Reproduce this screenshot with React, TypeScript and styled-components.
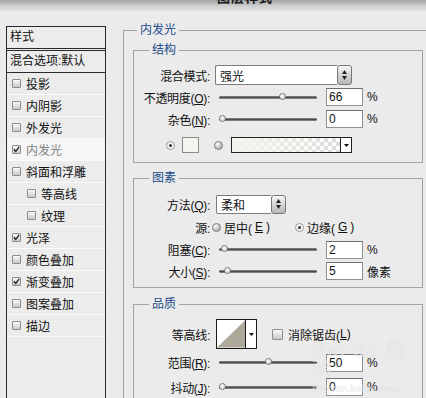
import React from 'react';
import styled, { createGlobalStyle } from 'styled-components';

const GlobalStyle = createGlobalStyle`
  html, body { margin: 0; padding: 0; }
  body {
    background: #ebebeb;
    font-family: "Liberation Sans", "Noto Sans CJK SC", sans-serif;
    font-size: 12px;
    color: #111;
  }
`;

const Dialog = styled.div`
  position: relative;
  width: 426px;
  height: 398px;
  overflow: hidden;
  background: #ebebeb;
`;

const TitleBar = styled.div`
  height: 11px;
  overflow: hidden;
  padding-left: 217px;
  background: linear-gradient(#a4a4a4, #cfcfcf 55%, #e0e0e0);
`;

const TitleText = styled.div`
  font-weight: bold;
  font-size: 13px;
  line-height: 14px;
  margin-top: -9px;
  letter-spacing: 1px;
  color: #1a1a1a;
`;

const Body = styled.div`
  display: flex;
  padding-left: 6px;
  gap: 17px;
`;

/* ---------- left style list ---------- */

const StyleList = styled.div`
  flex: none;
  width: 98px;
  height: 400px;
  margin-top: 15px;
  border: 1px solid #2a2a2a;
  background: #ececec;
`;

const ListHeader = styled.div`
  height: 21px;
  line-height: 21px;
  padding-left: 3px;
  border-bottom: 3px double #2a2a2a;
`;

const BlendRow = styled.div`
  height: 21px;
  line-height: 21px;
  padding-left: 3px;
  border-bottom: 1px solid #2a2a2a;
`;

const ListItem = styled.div<{ $sub?: boolean; $active?: boolean }>`
  display: flex;
  align-items: center;
  height: 21px;
  padding-left: ${p => (p.$sub ? 20 : 5)}px;
  border-bottom: 1px solid #fbfbfb;
  background: ${p => (p.$active ? '#f6f6f6' : '#ececec')};
  color: ${p => (p.$active ? '#808080' : '#111')};
`;

const CheckBox = styled.span<{ $size?: number }>`
  flex: none;
  display: inline-flex;
  align-items: center;
  justify-content: center;
  width: ${p => p.$size ?? 9}px;
  height: ${p => p.$size ?? 9}px;
  margin-right: 5px;
  box-sizing: border-box;
  border: 1px solid #8c8c8c;
  border-radius: 1px;
  background: linear-gradient(#fafafa, #c9c9c9);
`;

const Check = () => (
  <svg width="9" height="9" viewBox="0 0 9 9">
    <path d="M1.2 4.2 L3.5 7 L8 1" fill="none" stroke="#1c1c1c" strokeWidth="1.7" />
  </svg>
);

/* ---------- right panel ---------- */

const OuterGroup = styled.fieldset`
  flex: none;
  width: 320px;
  min-width: 0;
  margin: 12px 0 0 0;
  padding: 0 0 0 9px;
  border: 1px solid #a3a3a3;
  border-right: none;
  border-bottom: none;
`;

const Legend = styled.legend<{ $offset: number }>`
  margin-left: ${p => p.$offset}px;
  padding: 0 3px;
  line-height: 14px;
  color: #244d8a;
`;

const Group = styled.fieldset<{ $top: number; $padTop: number; $padBottom: number }>`
  box-sizing: border-box;
  width: 290px;
  min-width: 0;
  margin: ${p => p.$top}px 0 0 0;
  padding: ${p => p.$padTop}px 0 ${p => p.$padBottom}px 0;
  border: 1px solid #a3a3a3;
`;

const Row = styled.div<{ $h: number; $pad?: number }>`
  display: flex;
  align-items: center;
  height: ${p => p.$h}px;
  padding-left: ${p => p.$pad ?? 0}px;
`;

const Label = styled.span`
  flex: none;
  width: 76px;
  text-align: right;
  white-space: nowrap;
  letter-spacing: -0.3px;
`;

const SelectBox = styled.div<{ $w: number; $h: number; $ml: number }>`
  display: flex;
  width: ${p => p.$w}px;
  height: ${p => p.$h}px;
  margin-left: ${p => p.$ml}px;
`;

const SelectField = styled.div`
  flex: 1;
  display: flex;
  align-items: center;
  padding-left: 4px;
  background: #fff;
  border: 1px solid #7c7c7c;
  border-right: none;
  border-radius: 2px 0 0 2px;
`;

const Stepper = styled.div`
  flex: none;
  width: 15px;
  display: flex;
  align-items: center;
  justify-content: center;
  box-sizing: border-box;
  border: 1px solid #777;
  border-radius: 3px;
  background: linear-gradient(#f6f6f6, #d4d4d4 50%, #b9b9b9);
`;

const StepArrows = () => (
  <svg width="5" height="10" viewBox="0 0 5 10">
    <path d="M2.5 0 L5 4 L0 4 Z M2.5 10 L5 6 L0 6 Z" fill="#222" />
  </svg>
);

const Track = styled.div`
  position: relative;
  flex: none;
  width: 98px;
  height: 3px;
  margin-left: 9px;
  border-radius: 2px;
  background: linear-gradient(#8a8a8a, #4e4e4e 50%, #9a9a9a);
`;

const Thumb = styled.span`
  position: absolute;
  top: -3px;
  width: 7px;
  height: 7px;
  box-sizing: border-box;
  border-radius: 50%;
  border: 1px solid #7a7a7a;
  background: radial-gradient(circle at 40% 35%, #ffffff, #d8d8d8 70%);
`;

const ValueInput = styled.div`
  flex: none;
  width: 37px;
  height: 18px;
  margin-left: 9px;
  box-sizing: border-box;
  padding-left: 2px;
  line-height: 16px;
  background: #fff;
  border: 1px solid #8f8f8f;
  border-top-color: #6e6e6e;
`;

const Unit = styled.span`
  margin-left: 4px;
`;

const Radio = styled.span<{ $on?: boolean }>`
  flex: none;
  display: inline-flex;
  align-items: center;
  justify-content: center;
  width: 9px;
  height: 9px;
  box-sizing: border-box;
  border-radius: 50%;
  border: 1px solid ${p => (p.$on ? '#9a9a9a' : '#7d7d7d')};
  background: ${p =>
    p.$on
      ? '#f2f2f2'
      : 'radial-gradient(circle at 35% 30%, #ffffff, #c4c4c4 55%, #8e8e8e)'};
  &::after {
    content: '';
    display: ${p => (p.$on ? 'block' : 'none')};
    width: 3px;
    height: 3px;
    border-radius: 50%;
    background: #333;
  }
`;

const RadioOption = styled.label<{ $w?: number; $ml?: number }>`
  display: flex;
  align-items: center;
  gap: 3px;
  width: ${p => (p.$w ? `${p.$w}px` : 'auto')};
  margin-left: ${p => p.$ml ?? 0}px;
`;

const Swatch = styled.span`
  flex: none;
  width: 17px;
  height: 16px;
  margin-left: 7px;
  box-sizing: border-box;
  border: 1px solid #8a8a8a;
  background: #f4f4ee;
`;

const GradientPicker = styled.div`
  flex: none;
  display: flex;
  width: 121px;
  height: 16px;
  margin-left: 8px;
  box-sizing: border-box;
  border: 1px solid #222;
`;

const GradientFill = styled.div`
  flex: 1;
  background:
    linear-gradient(to right, #f4f4ee 0%, rgba(244, 244, 238, 0.2) 100%),
    repeating-conic-gradient(#d6d6d6 0 25%, #ffffff 0 50%) 0 0 / 8px 8px;
`;

const DropPart = styled.div`
  flex: none;
  width: 10px;
  display: flex;
  align-items: center;
  justify-content: center;
  border-left: 1px solid #222;
  background: #fff;
`;

const DownArrow = () => (
  <svg width="5" height="3" viewBox="0 0 5 3">
    <path d="M0 0 L5 0 L2.5 3 Z" fill="#111" />
  </svg>
);

const ContourPicker = styled.div`
  flex: none;
  display: flex;
  width: 41px;
  height: 30px;
  margin-left: 6px;
  box-sizing: border-box;
  border: 1px solid #1a1a1a;
  background: #fff;
`;

const ContourDrop = styled(DropPart)`
  width: 10px;
  border-left-color: #1a1a1a;
`;

const CheckOption = styled.label`
  display: flex;
  align-items: center;
  margin-left: 15px;
`;

const Watermark = styled.div`
  position: absolute;
  left: 312px;
  top: 340px;
  color: rgba(255, 255, 255, 0.55);
  text-shadow: 0 0 1px rgba(0, 0, 0, 0.12);
  font-weight: bold;
  line-height: 1;
  pointer-events: none;
`;

const WatermarkMain = styled.div`
  font-size: 20px;
  letter-spacing: 1px;
`;

const WatermarkSub = styled.div`
  font-size: 10px;
  margin-top: 4px;
`;

/* ---------- helpers ---------- */

type SliderProps = { value: number };
const Slider = ({ value }: SliderProps) => (
  <Track>
    <Thumb style={{ left: `${(value / 100) * 91}px` }} />
  </Track>
);

type ValueRowProps = {
  label: React.ReactNode;
  value: number;
  unit: string;
  h: number;
};
const ValueRow = ({ label, value, unit, h }: ValueRowProps) => (
  <Row $h={h}>
    <Label>{label}</Label>
    <Slider value={value} />
    <ValueInput>{value}</ValueInput>
    <Unit>{unit}</Unit>
  </Row>
);

const styles = [
  { label: '投影' },
  { label: '内阴影' },
  { label: '外发光' },
  { label: '内发光', checked: true, active: true },
  { label: '斜面和浮雕' },
  { label: '等高线', sub: true },
  { label: '纹理', sub: true },
  { label: '光泽', checked: true },
  { label: '颜色叠加' },
  { label: '渐变叠加', checked: true },
  { label: '图案叠加' },
  { label: '描边' },
];

const App = () => {
  return (
    <Dialog>
      <GlobalStyle />
      <TitleBar>
        <TitleText>图层样式</TitleText>
      </TitleBar>
      <Body>
        <StyleList>
          <ListHeader>样式</ListHeader>
          <BlendRow>混合选项:默认</BlendRow>
          {styles.map(s => (
            <ListItem key={s.label} $sub={s.sub} $active={s.active}>
              <CheckBox>{s.checked && <Check />}</CheckBox>
              {s.label}
            </ListItem>
          ))}
        </StyleList>

        <OuterGroup>
          <Legend $offset={4}>内发光</Legend>

          <Group $top={6} $padTop={7} $padBottom={2}>
            <Legend $offset={15}>结构</Legend>
            <Row $h={22}>
              <Label>混合模式:</Label>
              <SelectBox $w={137} $h={20} $ml={5}>
                <SelectField>强光</SelectField>
                <Stepper><StepArrows /></Stepper>
              </SelectBox>
            </Row>
            <ValueRow label={<>不透明度(<u>O</u>):</>} value={66} unit="%" h={22} />
            <ValueRow label={<>杂色(<u>N</u>):</>} value={0} unit="%" h={22} />
            <Row $h={30} $pad={32}>
              <Radio $on />
              <Swatch />
              <Radio style={{ marginLeft: 15 }} />
              <GradientPicker>
                <GradientFill />
                <DropPart><DownArrow /></DropPart>
              </GradientPicker>
            </Row>
          </Group>

          <Group $top={8} $padTop={8} $padBottom={5}>
            <Legend $offset={15}>图素</Legend>
            <Row $h={22}>
              <Label>方法(<u>Q</u>):</Label>
              <SelectBox $w={70} $h={19} $ml={6}>
                <SelectField>柔和</SelectField>
                <Stepper><StepArrows /></Stepper>
              </SelectBox>
            </Row>
            <Row $h={24}>
              <Label>源:</Label>
              <RadioOption $w={83} $ml={2}>
                <Radio />
                居中(<u>E</u>)
              </RadioOption>
              <RadioOption>
                <Radio $on />
                边缘(<u>G</u>)
              </RadioOption>
            </Row>
            <ValueRow label={<>阻塞(<u>C</u>):</>} value={2} unit="%" h={21} />
            <ValueRow label={<>大小(<u>S</u>):</>} value={5} unit="像素" h={22} />
          </Group>

          <Group $top={9} $padTop={6} $padBottom={0}>
            <Legend $offset={15}>品质</Legend>
            <Row $h={34}>
              <Label>等高线:</Label>
              <ContourPicker>
                <svg width="29" height="28" viewBox="0 0 29 28">
                  <path d="M0 28 L29 0 L29 28 Z" fill="#aca89a" />
                </svg>
                <ContourDrop><DownArrow /></ContourDrop>
              </ContourPicker>
              <CheckOption>
                <CheckBox $size={11}></CheckBox>
                消除锯齿(<u>L</u>)
              </CheckOption>
            </Row>
            <ValueRow label={<>范围(<u>R</u>):</>} value={50} unit="%" h={23} />
            <ValueRow label={<>抖动(<u>J</u>):</>} value={0} unit="%" h={26} />
          </Group>
        </OuterGroup>
      </Body>
      <Watermark>
        <WatermarkMain>Bai du 经验</WatermarkMain>
        <WatermarkSub>jingyan.baidu.com</WatermarkSub>
      </Watermark>
    </Dialog>
  );
};

export default App;
